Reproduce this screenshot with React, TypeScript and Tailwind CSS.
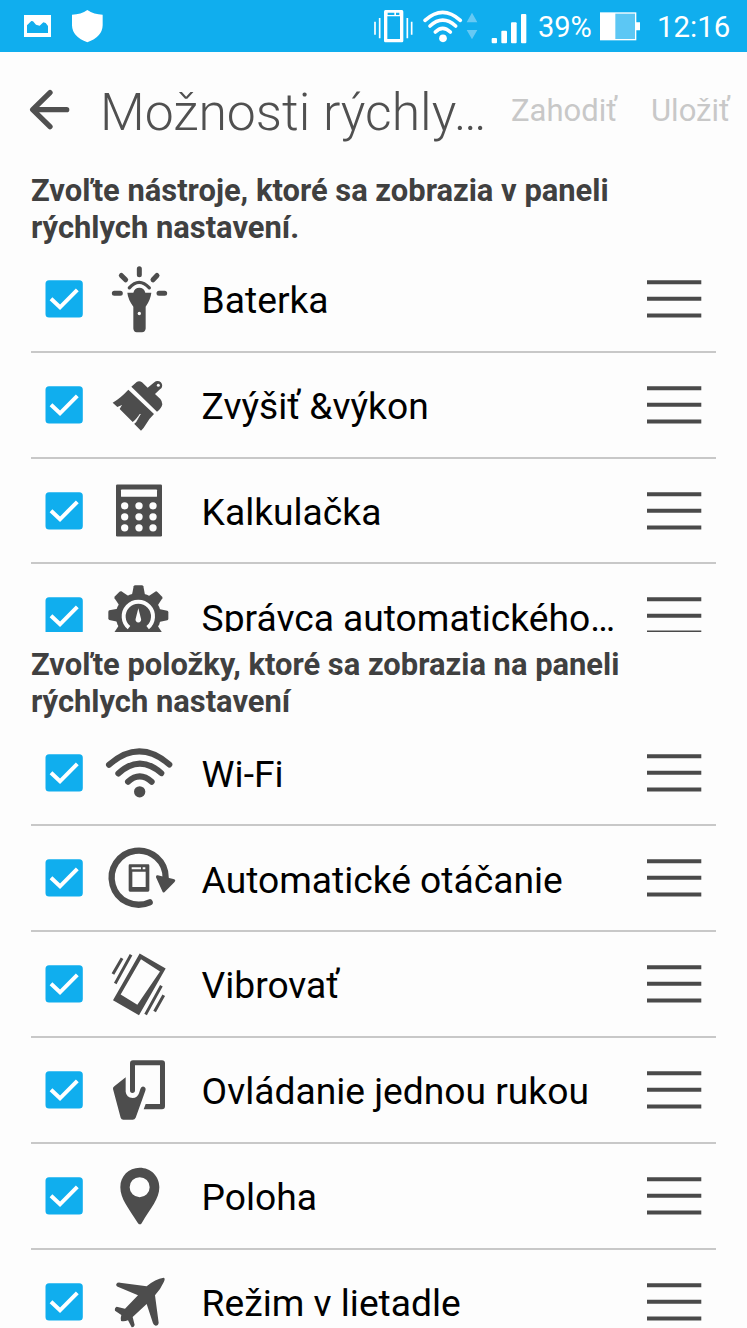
import type { ReactNode } from "react";

type Item = { label: string; y: number; icon: ReactNode };

const flashlight = (
  <>
    <path d="M358 56V74M304 76L317 89M411 76L399 89M283 129H301M417 129H434" stroke="#4d4d4d" strokeWidth="15" strokeLinecap="round" fill="none" />
    <path d="M328 113Q357 80 388 113" stroke="#4d4d4d" strokeWidth="10" strokeLinecap="round" fill="none" />
    <path d="M322 128H340Q344 113 358 113Q372 113 376 128H394Q392 148 377 170V235Q376 246 366 246H350Q341 246 340 235V170Q324 148 322 128Z" />
    <circle cx="358" cy="190" r="5" fill="#fdfdfd" />
  </>
);

const brush = (
  <>
    <path d="M334 409L350 395Q358 390 366 396L383 412L403 396Q409 390 418 393Q429 399 426 410Q425 414 420 417L405 431L421 446Q427 453 427 462Q425 474 411 484Z" />
    <circle cx="415" cy="405" r="4.5" fill="#fdfdfd" />
    <path d="M325 418L402 491Q387 505 378 522Q372 533 363 541L343 521L353 504L338 515L299 476L306 464L292 470L278 457Q301 444 325 418Z" />
    <path d="M340 517L361 491L347 516Z" fill="#fdfdfd" stroke="#fdfdfd" strokeWidth="2" />
  </>
);

const calculator = (
  <>
    <rect x="288" y="72" width="138" height="156" rx="4" />
    <rect x="303" y="87" width="108" height="22" rx="2" fill="#fdfdfd" />
    {[136, 169, 202].map((cy) =>
      [314, 357, 399].map((cx) => <circle key={`${cx}-${cy}`} cx={cx} cy={cy} r="11" fill="#fdfdfd" />),
    )}
  </>
);

const gear = (
  <>
    <circle cx="355" cy="468" r="68" />
    {[0, 45, 90, 135, 180, 225, 270, 315].map((a) => (
      <path key={a} transform={`rotate(${a} 355 467)`} d="M336 405L341 380Q342 377 346 377H365Q369 377 370 380L375 405Z" />
    ))}
    <path d="M327 504A44 44 0 1 1 383 504" stroke="#fdfdfd" strokeWidth="12" fill="none" />
    <path d="M355 446L363 477A8.5 8.5 0 1 1 347 477Z" fill="#fdfdfd" />
  </>
);

const wifi = (
  <>
    <g fill="none" stroke="#4d4d4d" strokeWidth="18" strokeLinecap="round">
      <path d="M267 103Q357 23 448 102" />
      <path d="M295 129Q359 70 424 128" />
      <path d="M324 154Q359 122 395 154" />
    </g>
    <circle cx="359" cy="184" r="17" />
  </>
);

const rotate = (
  <>
    <path d="M389 518A81 81 0 1 1 437 445V450" stroke="#4d4d4d" strokeWidth="19" strokeLinecap="round" fill="none" />
    <path d="M413 437L460 448Q470 450 463 458L434 487Q429 491 427 485L408 443Q407 436 413 437Z" />
    <path fillRule="evenodd" d="M329 404H385Q388 404 388 408V482Q388 486 384 486H330Q326 486 326 482V408Q326 404 329 404ZM337 426V472H377V426ZM335 413V419H363V413ZM368 413V419H376V413Z" />
  </>
);

const vibrate = (
  <>
    <path fillRule="evenodd" d="M359 41L437 86L357 226L279 181ZM363 58L302 164L352 195L420 95Z" />
    <path d="M304 59L281 99M331 49L288 127M422 142L379 220M429 170L406 211" stroke="#4d4d4d" strokeWidth="9" strokeLinecap="square" fill="none" />
  </>
);

const oneHand = (
  <>
    <path d="M330 451V370Q330 361 339 361H426Q435 361 435 370V499Q435 508 426 508H371L377 492H420V376H345V451Q345 459 337 459Q330 459 330 451Z" />
    <path d="M317 412V455Q319 473 338 474Q352 474 357 460L361 447Q364 437 372 440Q379 443 376 452L347 533Q344 539 338 539H310Q304 539 302 533L279 447Q278 443 283 439Z" />
  </>
);

const pin = (
  <path
    fillRule="evenodd"
    d="M359 58C392 58 418 83 418 116C418 151 393 176 365 224Q360 231 354 224C325 177 301 151 301 116C301 83 326 58 359 58ZM359 86A30 30 0 1 0 359 146A30 30 0 1 0 359 86Z"
  />
);

const plane = (
  <path d="M431 387Q437 388 431 401Q423 420 405 440L416 522Q415 531 407 531Q401 530 399 524L380 466L338 505L344 529Q342 537 335 536L324 515Q312 520 303 517Q301 508 304 499L285 486Q283 477 290 474L315 480L354 440L295 415Q287 412 289 406Q292 401 300 402L380 413Q406 390 431 387Z" />
);

const tools: Item[] = [
  { label: "Baterka", y: -9.4, icon: flashlight },
  { label: "Zvýšiť &výkon", y: 308, icon: brush },
  { label: "Kalkulačka", y: -4.4, icon: calculator },
  { label: "Správca automatického…", y: 313, icon: gear },
];

const entries: Item[] = [
  { label: "Wi-Fi", y: -28.4, icon: wifi },
  { label: "Automatické otáčanie", y: 289, icon: rotate },
  { label: "Vibrovať", y: -23.4, icon: vibrate },
  { label: "Ovládanie jednou rukou", y: 294, icon: oneHand },
  { label: "Poloha", y: -13.4, icon: pin },
  { label: "Režim v lietadle", y: 304, icon: plane },
];

function Row({ label, y, icon }: Item) {
  return (
    <li className="ml-[31px] flex h-[105.8px] w-[685px] shrink-0 border-b-2 border-[#c8c8c8]">
      <svg className="mt-[33px] ml-[14px] size-[38px] shrink-0" viewBox="0 0 38 38">
        <rect x="0.5" y="0.2" width="37.3" height="37.4" rx="3.5" fill="#10aeee" />
        <path d="M6 18.8L15 27.3L32.3 9.8" stroke="#fff" strokeWidth="4" fill="none" />
      </svg>
      <svg className="ml-[17px] h-[103.8px] w-20 shrink-0" viewBox={`240 ${y} 240 311.4`} fill="#4d4d4d">
        {icon}
      </svg>
      <span className="mt-[31.2px] ml-[21.6px] w-[440px] text-[37.2px] leading-[44px] whitespace-nowrap text-black">{label}</span>
      <svg className="mt-[32px] ml-[5.4px] h-[42px] w-[56px] shrink-0" viewBox="0 0 56 42">
        <path d="M0 3.2H54.3M0 19.8H54.3M0 36.4H54.3" stroke="#4a4a4a" strokeWidth="4" />
      </svg>
    </li>
  );
}

function StatusBar() {
  return (
    <div className="flex h-[52px] shrink-0 bg-[#10aeee] text-white">
      <svg className="h-[52px] w-[120px] shrink-0" viewBox="0 0 360 156" fill="#fff">
        <path fillRule="evenodd" d="M72 45H153V111H72ZM81 99H144V78L137 69L130 67L119 77L108 74L99 64L94 63L81 76Z" />
        <path d="M262 30Q282 44 308 44V76Q307 111 262 127Q217 111 216 76V44Q243 44 262 30Z" />
      </svg>
      <svg className="ml-[240px] h-[52px] w-[172px] shrink-0" viewBox="0 0 516 156" fill="#fff">
        <path fillRule="evenodd" d="M76 30H126Q130 30 130 35V122Q130 127 126 127H76Q72 127 72 122V35Q72 30 76 30ZM82 49V117H120V49ZM83 38V45H103V38ZM108 38V45H118V38Z" />
        <path d="M45 65V104M59 54V115M142 54V115M155 65V104" stroke="#fff" strokeWidth="5" />
        <g fill="none" stroke="#fff" strokeWidth="11" strokeLinecap="round">
          <path d="M195 61Q248 13 301 61" />
          <path d="M210 78Q248 43 287 78" />
          <path d="M226 96Q248 74 271 96" />
        </g>
        <circle cx="249" cy="115" r="11.5" />
        <path d="M320 67L336 38L352 67ZM320 90H352L336 118Z" fill="#66c9f4" />
        <rect x="395" y="114" width="16" height="16" rx="3" />
        <rect x="424" y="92" width="17" height="38" rx="3" />
        <rect x="453" y="67" width="17" height="63" rx="3" />
        <rect x="483" y="42" width="16" height="88" rx="3" />
      </svg>
      <span className="ml-[6px] w-[61px] pt-[10px] text-[29px] leading-[34px] whitespace-nowrap">39%</span>
      <svg className="h-[52px] w-[50px] shrink-0" viewBox="717 0 150 156">
        <rect x="722" y="39" width="105" height="80" fill="#5cc7f4" stroke="#fff" strokeWidth="4" />
        <path d="M722 39H766V119H722ZM828 67H840V91H828Z" fill="#fff" />
      </svg>
      <span className="ml-[8px] pt-[10px] text-[29.4px] leading-[34px] whitespace-nowrap">12:16</span>
    </div>
  );
}

export default function App() {
  return (
    <div className="flex h-[1328px] w-[747px] flex-col overflow-hidden bg-[#fdfdfd] font-[Roboto,sans-serif]">
      <StatusBar />
      <header className="flex h-[118px] shrink-0 text-[#505050]">
        <svg className="mt-[36px] ml-[28px] h-[44px] w-[44px] shrink-0" viewBox="84 264 132 132">
          <path d="M200 329H99M150 278L98 329L150 380" fill="none" stroke="#505050" strokeWidth="16" strokeLinecap="round" strokeLinejoin="round" />
        </svg>
        <h1 className="mt-[31px] ml-[28px] w-[411px] text-[51.7px] leading-[60px] font-light whitespace-nowrap">Možnosti rýchly…</h1>
        <button className="mt-[41px] flex h-[36px] w-[140px] text-[31px] leading-[36px] text-[#c8c8c8]">Zahodiť</button>
        <button className="mt-[41px] flex h-[36px] text-[31px] leading-[36px] text-[#c8c8c8]">Uložiť</button>
      </header>
      <h2 className="h-[77px] shrink-0 pt-[2px] pl-[31px] text-[30.9px] leading-[37px] font-bold text-[#404040]">
        Zvoľte nástroje, ktoré sa zobrazia v paneli
        <br />
        rýchlych nastavení.
      </h2>
      <ul className="flex h-[384.7px] shrink-0 flex-col overflow-hidden">
        {tools.map((t) => (
          <Row key={t.label} {...t} />
        ))}
      </ul>
      <h2 className="h-[88.9px] shrink-0 pt-[14.3px] pl-[31px] text-[30.9px] leading-[37px] font-bold text-[#404040]">
        Zvoľte položky, ktoré sa zobrazia na paneli
        <br />
        rýchlych nastavení
      </h2>
      <ul className="flex flex-col">
        {entries.map((e) => (
          <Row key={e.label} {...e} />
        ))}
      </ul>
    </div>
  );
}
